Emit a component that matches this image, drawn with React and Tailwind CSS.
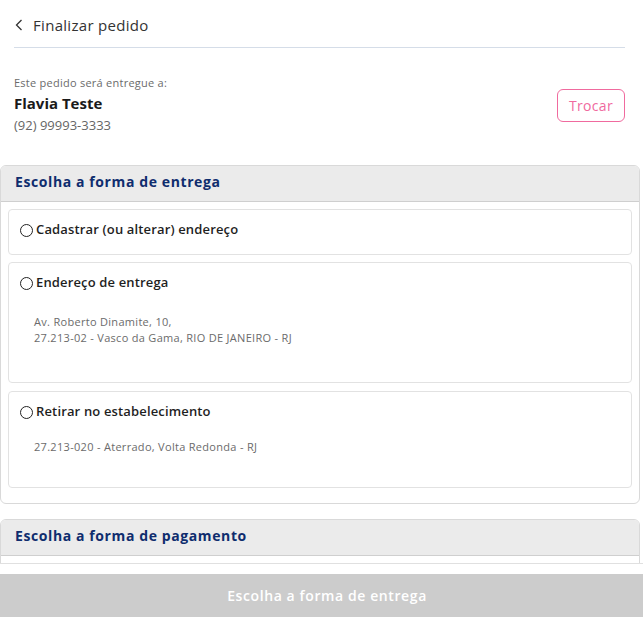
import React from "react";

const font = { fontFamily: '"Open Sans", "Liberation Sans", sans-serif' };

function Radio() {
  return <span className="inline-block w-[13px] h-[13px] rounded-full border border-[#222] shrink-0" />;
}

function Option({ title, lines, heightClass }) {
  return (
    <div className={`rounded-[4px] border border-[#e2e2e2] bg-white pl-[11px] pr-3 pt-[10px] ${heightClass}`}>
      {title && (
        <div className="flex items-center gap-[3px] h-[20px]">
          <Radio />
          <span className="text-[13px] font-semibold text-[#1f1f1f] tracking-[0.15px]">{title}</span>
        </div>
      )}
      {lines && (
        <div className="pl-[14px] text-[11px] leading-[16px] text-[#6b6b6b] tracking-[0.3px]">
          {lines}
        </div>
      )}
    </div>
  );
}

export default function App() {
  return (
    <div className="w-[643px] h-[621px] overflow-hidden bg-white flex flex-col" style={font}>
      <div className="flex-1 overflow-hidden">
        <div className="ml-[14px] mr-[18px]">
          <div className="h-[48px] pt-[3px] flex items-center border-b border-[#d5dde8]">
            <svg width="8" height="12" viewBox="0 0 8 12" className="ml-[1px] mr-[10px]">
              <polyline points="6.5,1 1.5,6 6.5,11" fill="none" stroke="#333" strokeWidth="1.3" />
            </svg>
            <span className="text-[15px] text-[#333] tracking-[0.3px]">Finalizar pedido</span>
          </div>
          <div className="flex items-start justify-between mt-[27px]">
            <div>
              <div className="text-[11px] leading-[16px] text-[#6b6b6b] tracking-[0.25px]">Este pedido será entregue a:</div>
              <div className="text-[15px] leading-[22px] font-bold text-[#1a1a1a] mt-[1px]">Flavia Teste</div>
              <div className="text-[13px] leading-[20px] text-[#666] mt-[1px]">(92) 99993-3333</div>
            </div>
            <button className="mt-[14px] w-[68px] h-[33px] rounded-[6px] border border-[#f06a9e] text-[14px] text-[#f06a9e] bg-white tracking-[0.3px]">
              Trocar
            </button>
          </div>
        </div>

        <div className="mt-[30px] w-[640px] rounded-[6px] border border-[#d9d9d9] overflow-hidden">
          <div className="h-[36px] bg-[#ebebeb] border-b border-[#cfcfcf] flex items-center px-[14px] pb-[5px]">
            <span className="text-[14px] font-bold text-[#0f2d6e] tracking-[0.6px]">Escolha a forma de entrega</span>
          </div>
          <div className="px-[7px] pt-[7px] pb-[15px] flex flex-col gap-[7px]">
            <Option title="Cadastrar (ou alterar) endereço" heightClass="h-[46px]" />
            <Option
              title="Endereço de entrega"
              heightClass="h-[121px]"
              lines={
                <div className="mt-[21px]">
                  <div>Av. Roberto Dinamite, 10,</div>
                  <div>27.213-02 - Vasco da Gama, RIO DE JANEIRO - RJ</div>
                </div>
              }
            />
            <Option
              title="Retirar no estabelecimento"
              heightClass="h-[97px] mt-px"
              lines={<div className="mt-[17px]">27.213-020 - Aterrado, Volta Redonda - RJ</div>}
            />
          </div>
        </div>

        <div className="mt-[15px] w-[640px] rounded-[6px] border border-[#d9d9d9] overflow-hidden">
          <div className="h-[36px] bg-[#ebebeb] border-b border-[#cfcfcf] flex items-center px-[14px] pb-[5px]">
            <span className="text-[14px] font-bold text-[#0f2d6e] tracking-[0.6px]">Escolha a forma de pagamento</span>
          </div>
          <div className="px-[7px] pt-[7px] pb-[15px]">
            <div className="h-[46px] rounded-[4px] border border-[#e2e2e2] bg-white" />
          </div>
        </div>
      </div>
      <div className="border-t border-[#e0e0e0] bg-white pt-[10px] pb-[4px]">
        <div className="h-[43px] bg-[#cccccc] flex items-center justify-center pl-[11px]">
          <span className="text-[14px] font-semibold text-white tracking-[0.6px]">Escolha a forma de entrega</span>
        </div>
      </div>
    </div>
  );
}
